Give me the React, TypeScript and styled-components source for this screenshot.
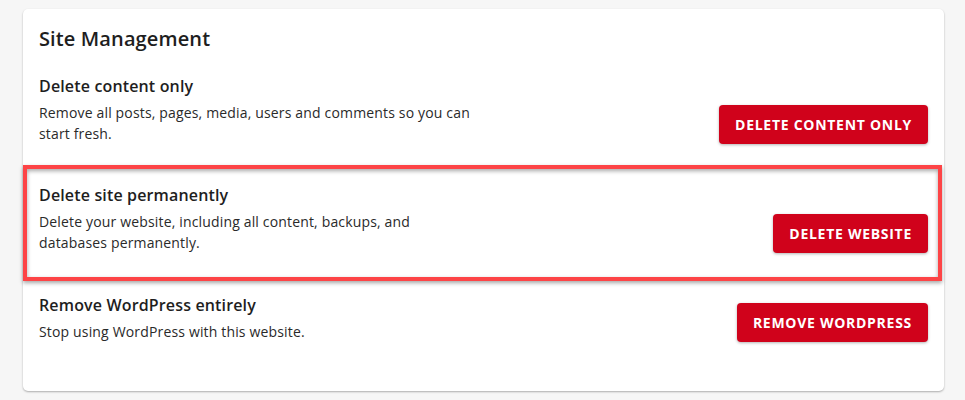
import styled, { createGlobalStyle } from "styled-components";

const GlobalStyle = createGlobalStyle`
  html, body {
    margin: 0;
    padding: 0;
    background: #f6f6f6;
    font-family: "Open Sans", "Liberation Sans", sans-serif;
    color: #222;
  }
`;

type Action = {
  title: string;
  description: string;
  button: string;
  highlighted?: boolean;
};

const actions: Action[] = [
  {
    title: "Delete content only",
    description:
      "Remove all posts, pages, media, users and comments so you can start fresh.",
    button: "Delete content only",
  },
  {
    title: "Delete site permanently",
    description:
      "Delete your website, including all content, backups, and databases permanently.",
    button: "Delete website",
    highlighted: true,
  },
  {
    title: "Remove WordPress entirely",
    description: "Stop using WordPress with this website.",
    button: "Remove WordPress",
  },
];

export default function App() {
  return (
    <>
      <GlobalStyle />
      <StyledPage>
        <StyledCard>
          <StyledCardTitle>Site Management</StyledCardTitle>
          {actions.map((a) => (
            <StyledRow key={a.title} $highlighted={a.highlighted}>
              <StyledRowText>
                <StyledRowTitle>{a.title}</StyledRowTitle>
                <StyledRowDescription>{a.description}</StyledRowDescription>
              </StyledRowText>
              <StyledDangerButton type="button">{a.button}</StyledDangerButton>
            </StyledRow>
          ))}
        </StyledCard>
      </StyledPage>
    </>
  );
}

const StyledPage = styled.div`
  padding: 9px 21px 10px 23px;
  min-height: 100vh;
  box-sizing: border-box;
`;

const StyledCard = styled.div`
  background: #fff;
  border-radius: 5px;
  box-shadow: 0 1px 2px rgba(0, 0, 0, 0.3);
  padding: 16px 0 28px 0;
`;

const StyledCardTitle = styled.h2`
  margin: 0 0 5px 0;
  padding: 0 16px;
  font-size: 20px;
  line-height: 27px;
  font-weight: 600;
  letter-spacing: 0.12px;
  color: #1e1e1e;
`;

const StyledRow = styled.div<{ $highlighted?: boolean }>`
  position: relative;
  display: flex;
  justify-content: space-between;
  align-items: flex-end;
  gap: 24px;
  padding: ${({ $highlighted }) => ($highlighted ? "18px 16px 23px" : "17px 16px 21px")};

  ${({ $highlighted }) =>
    $highlighted &&
    `
    &::after {
      content: "";
      position: absolute;
      top: 0;
      left: 0;
      right: 2px;
      bottom: -5px;
      border: 4px solid #fd4446;
      box-shadow: 0 2px 4px rgba(0, 0, 0, 0.35),
        inset 0 2px 4px rgba(0, 0, 0, 0.35);
      pointer-events: none;
    }
  `}
`;

const StyledRowText = styled.div`
  display: flex;
  flex-direction: column;
  max-width: 436px;
`;

const StyledRowTitle = styled.h3`
  margin: 0 0 4px 0;
  font-size: 16px;
  line-height: 24px;
  font-weight: 600;
  letter-spacing: 0.15px;
  color: #1e1e1e;
`;

const StyledRowDescription = styled.p`
  margin: 0;
  font-size: 14px;
  line-height: 21px;
  letter-spacing: 0.16px;
  color: #2a2a2a;
`;

const StyledDangerButton = styled.button`
  flex-shrink: 0;
  height: 39px;
  padding: 0 16px;
  border: none;
  border-radius: 4px;
  background: #d0021b;
  color: #fff;
  font-family: "Open Sans", "Liberation Sans", sans-serif;
  font-size: 14px;
  font-weight: 700;
  letter-spacing: 0.72px;
  text-transform: uppercase;
  box-shadow: 0 1px 3px rgba(0, 0, 0, 0.3);
  cursor: pointer;
`;
